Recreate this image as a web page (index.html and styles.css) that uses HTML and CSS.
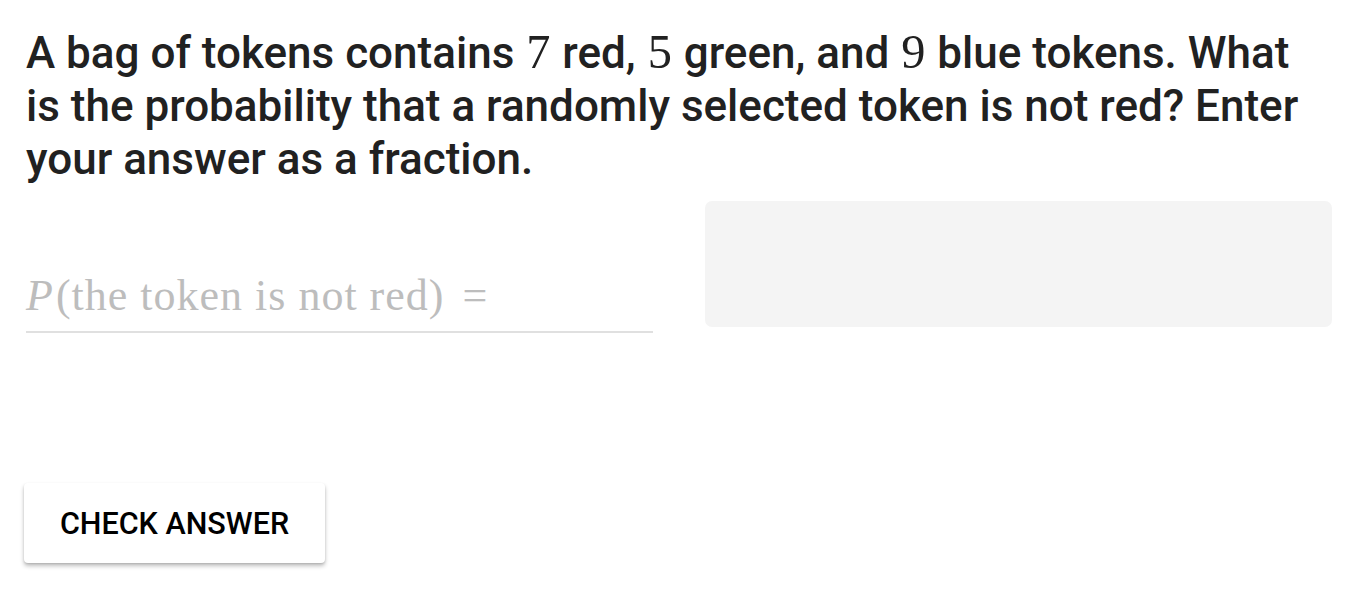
FILE: index.html
```html
<!DOCTYPE html>
<html>
<head>
	<meta charset="utf-8">
	<meta name="viewport" content="width=device-width, initial-scale=1.0">
	<title>Probability Question</title>
	<link rel="stylesheet" href="styles.css">
</head>
<body>
	<div class="container">
		<p class="question">A bag of tokens contains <span class="num">7</span> red, <span class="num">5</span> green, and <span class="num">9</span> blue tokens. What is the probability that a randomly selected token is not red? Enter your answer as a fraction.</p>
		<div class="answer-row">
			<div class="math-field">
				<span class="math"><i>P</i>(the token is not red)<span class="eq">=</span></span>
			</div>
			<div class="answer-box"></div>
		</div>
		<button class="check-btn">CHECK ANSWER</button>
	</div>
</body>
</html>
```

FILE: styles.css
```css
* {
	padding: 0;
	margin: 0;
	box-sizing: border-box;
}
html, body {
	width: 100%;
	height: 100vh;
	background: white;
	font-family: Roboto, "Liberation Sans", sans-serif;
	overflow: hidden;
}
.container {
	padding: 25px 18px 0 26px;
}
.question {
	font-size: 44px;
	font-weight: 500;
	line-height: 53px;
	color: #212121;
	padding-right: 20px;
}
.num {
	font-family: "Liberation Serif", serif;
	font-weight: normal;
	font-size: 1.1em;
	padding: 0 1px;
}
.answer-row {
	display: flex;
	align-items: flex-start;
	gap: 52px;
	margin-top: 15px;
}
.math-field {
	flex: 1;
	height: 132px;
	display: flex;
	align-items: flex-end;
	padding-bottom: 13px;
	border-bottom: 2px solid #e0e0e0;
}
.math {
	font-family: "Liberation Serif", serif;
	font-size: 44px;
	letter-spacing: 1px;
	color: #bdbdbd;
	line-height: 1;
}
.math i {
	margin-right: 2px;
}
.eq {
	margin-left: 18px;
}
.answer-box {
	flex: 1;
	height: 126px;
	background: #f4f4f4;
	border-radius: 7px;
}
.check-btn {
	margin-top: 150px;
	margin-left: -2px;
	width: 301px;
	height: 80px;
	border: none;
	border-radius: 4px;
	background: white;
	font-family: Roboto, "Liberation Sans", sans-serif;
	font-size: 30.5px;
	font-weight: 500;
	color: black;
	box-shadow: 0 3px 4px rgba(0, 0, 0, 0.25), 0 1px 2px rgba(0, 0, 0, 0.1);
	cursor: pointer;
}
```
